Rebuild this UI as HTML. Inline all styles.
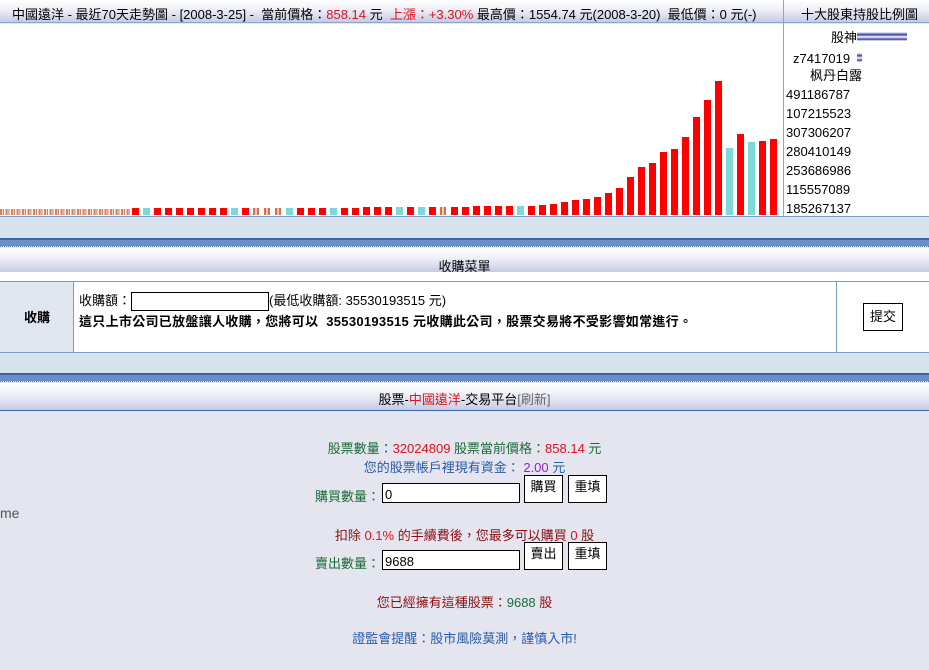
<!DOCTYPE html>
<html><head><meta charset="utf-8"><style>
*{margin:0;padding:0;box-sizing:border-box}
body{width:929px;height:670px;overflow:hidden;background:#e4e5ef;font-family:"Liberation Sans","Noto Sans CJK TC","WenQuanYi Zen Hei",sans-serif;font-size:13px;color:#000;position:relative}
.abs{position:absolute}
.grad{background:linear-gradient(#fff 0%,#f0f1f8 40%,#c6cbe4 100%)}
.red{color:#e0101e}
</style></head><body>
<div class="abs grad" style="left:0;top:0;width:929px;height:23px;border-bottom:1px solid #8aa6cc"></div>
<div class="abs" style="left:12px;top:4px;white-space:nowrap;font-size:13px">中國遠洋 - 最近70天走勢圖 - [2008-3-25] - &nbsp;當前價格：<span class="red">858.14</span> 元 &nbsp;<span class="red">上漲：+3.30%</span> 最高價：1554.74 元(2008-3-20) &nbsp;最低價：0 元(-)</div>
<div class="abs" style="left:783px;top:0;width:1px;height:216px;background:#8aa6cc"></div>
<div class="abs" style="left:801px;top:4px;white-space:nowrap">十大股東持股比例圖</div>
<div class="abs" style="left:0;top:24px;width:783px;height:192px;background:#fff"></div>
<div class="abs" style="left:784px;top:24px;width:145px;height:192px;background:#fff"></div>
<div class="abs" style="left:0;top:209px;width:130px;height:6px;background:repeating-linear-gradient(90deg,#d88060 0 2px,#f4d0c0 2px 3px,#d88060 3px 4px,#fff 4px 5.5px)"></div>
<svg class="abs" style="left:0;top:0" width="783" height="216" id="ch"></svg>
<div class="abs" style="left:784px;top:26px;width:145px;font-size:13px;line-height:19px">
<div style="position:absolute;top:2px;right:72px;white-space:nowrap">股神</div>
<div style="position:absolute;top:6px;left:73px;width:50px;height:9px;background:linear-gradient(#fff,#3a3fa0 30%,#fff 55%,#3a3fa0 80%,#fff)"></div>
<div style="position:absolute;top:23px;left:9px;width:64px;overflow:hidden;white-space:nowrap">z7417019</div>
<div style="position:absolute;top:27px;left:73px;width:5px;height:9px;background:linear-gradient(#fff,#3a3fa0 30%,#fff 55%,#3a3fa0 80%,#fff)"></div>
<div style="position:absolute;top:40px;left:12px;width:66px;text-align:right;overflow:hidden;white-space:nowrap">枫丹白露</div>
<div style="position:absolute;top:59px;left:2px;width:73px;overflow:hidden;white-space:nowrap">491186787</div>
<div style="position:absolute;top:78px;left:2px;width:73px;overflow:hidden;white-space:nowrap">107215523</div>
<div style="position:absolute;top:97px;left:2px;width:73px;overflow:hidden;white-space:nowrap">307306207</div>
<div style="position:absolute;top:116px;left:2px;width:73px;overflow:hidden;white-space:nowrap">280410149</div>
<div style="position:absolute;top:135px;left:2px;width:73px;overflow:hidden;white-space:nowrap">253686986</div>
<div style="position:absolute;top:154px;left:2px;width:73px;overflow:hidden;white-space:nowrap">115557089</div>
<div style="position:absolute;top:173px;left:2px;width:73px;overflow:hidden;white-space:nowrap">185267137</div>
</div>
<div class="abs" style="left:0;top:216px;width:929px;height:22px;background:#d7e3ec;border-top:1px solid #7c9cc8"></div>
<div class="abs" style="left:0;top:238px;width:929px;height:8px;background:#6a8fc2;border-top:2px solid #3a66a8"></div>
<div class="abs" style="left:0;top:246px;width:929px;height:1px;border-top:1px dotted #5a7aa8"></div>
<div class="abs grad" style="left:0;top:248px;width:929px;height:24px"></div>
<div class="abs" style="left:0;top:256px;width:929px;text-align:center">收購菜單</div>
<div class="abs" style="left:0;top:272px;width:929px;height:9px;background:#fff"></div>
<div class="abs" style="left:0;top:281px;width:929px;height:72px;background:#fff;border-top:1px solid #7c9cc8;border-bottom:1px solid #7c9cc8"></div>
<div class="abs" style="left:0;top:282px;width:74px;height:70px;background:#dfe6f0;border-right:1px solid #7c9cc8"></div>
<div class="abs" style="left:24px;top:307px;font-weight:bold">收購</div>
<div class="abs" style="left:836px;top:282px;width:1px;height:70px;background:#7c9cc8"></div>
<div class="abs" style="left:79px;top:290px;white-space:nowrap">收購額：<span style="display:inline-block;width:138px;height:19px;border:1px solid #000;vertical-align:middle"></span>(最低收購額: 35530193515 元)</div>
<div class="abs" style="left:79px;top:311px;white-space:nowrap;font-weight:bold;letter-spacing:0.3px">這只上市公司已放盤讓人收購，您將可以 &nbsp;35530193515 元收購此公司，股票交易將不受影響如常進行。</div>
<div class="abs" style="left:863px;top:303px;width:40px;height:28px;border:1px solid #000;background:#fff;text-align:center;line-height:26px">提交</div>
<div class="abs" style="left:0;top:353px;width:929px;height:20px;background:#d7e3ec"></div>
<div class="abs" style="left:0;top:373px;width:929px;height:8px;background:#6a8fc2;border-top:2px solid #3a66a8"></div>
<div class="abs" style="left:0;top:381px;width:929px;height:1px;border-top:1px dotted #5a7aa8"></div>
<div class="abs grad" style="left:0;top:383px;width:929px;height:27px"></div>
<div class="abs" style="left:0;top:410px;width:929px;height:1px;background:#3a66a8"></div>
<div class="abs" style="left:0;top:389px;width:929px;text-align:center">股票-<span class="red">中國遠洋</span>-交易平台<span style="color:#666">[刷新]</span></div>
<div class="abs" style="left:0;top:505px;font-size:14px;color:#555">me</div>
<div class="abs" style="left:0;top:438px;width:929px;text-align:center;color:#1e6a3a">股票數量：<span class="red">32024809</span> 股票當前價格：<span class="red">858.14</span> 元</div>
<div class="abs" style="left:0;top:457px;width:929px;text-align:center;color:#2a5aa8">您的股票帳戶裡現有資金： <span style="color:#a020c0">2.00</span> 元</div>
<div class="abs" style="left:315px;top:486px;color:#1e6a3a">購買數量：</div>
<div class="abs" style="left:382px;top:483px;width:138px;height:20px;border:1px solid #000;background:#fff;padding:3px 2px">0</div>
<div class="abs" style="left:524px;top:475px;width:39px;height:28px;border:1px solid #000;background:#fff;text-align:center;line-height:22px">購買</div>
<div class="abs" style="left:568px;top:475px;width:39px;height:28px;border:1px solid #000;background:#fff;text-align:center;line-height:22px">重填</div>
<div class="abs" style="left:0;top:525px;width:929px;text-align:center;color:#8a1010">扣除 <span class="red">0.1%</span> 的手續費後，您最多可以購買 <span class="red">0</span> 股</div>
<div class="abs" style="left:315px;top:553px;color:#1e6a3a">賣出數量：</div>
<div class="abs" style="left:382px;top:550px;width:138px;height:20px;border:1px solid #000;background:#fff;padding:3px 2px">9688</div>
<div class="abs" style="left:524px;top:542px;width:39px;height:28px;border:1px solid #000;background:#fff;text-align:center;line-height:22px">賣出</div>
<div class="abs" style="left:568px;top:542px;width:39px;height:28px;border:1px solid #000;background:#fff;text-align:center;line-height:22px">重填</div>
<div class="abs" style="left:0;top:592px;width:929px;text-align:center;color:#8a1010">您已經擁有這種股票：<span style="color:#1e6a3a">9688</span> 股</div>
<div class="abs" style="left:0;top:628px;width:929px;text-align:center;color:#2a5aa8">證監會提醒：股市風險莫測，謹慎入市!</div>
<script>
var tops={41:199,42:197,43:193,44:188,45:177,46:167,47:163,48:152,49:149,50:137,51:117,52:100,53:81,54:148,55:134,56:142,57:141,58:139};
var cy=[1,9,14,18,24,26,35,54,56],st=[11,12,13,28];
var s='';
for(var i=0;i<59;i++){var x=132+11*i,t;
if(tops[i])t=tops[i];else{var h=i<=20?7:i<=30?8:i<=36?9:i==37?10:i==38?11:i==39?13:15;t=215-h;}
var c=cy.indexOf(i)>=0?'#7ed8d8':'#f00';
if(st.indexOf(i)>=0){s+='<rect x="'+x+'" y="'+t+'" width="2" height="'+(215-t)+'" fill="#d87050"/><rect x="'+(x+2)+'" y="'+t+'" width="2" height="'+(215-t)+'" fill="#f4c8b0"/><rect x="'+(x+4)+'" y="'+t+'" width="2" height="'+(215-t)+'" fill="#d87050"/>';}
else s+='<rect x="'+x+'" y="'+t+'" width="7" height="'+(215-t)+'" fill="'+c+'"/>';}
document.getElementById('ch').innerHTML=s;
</script>
</body></html>
